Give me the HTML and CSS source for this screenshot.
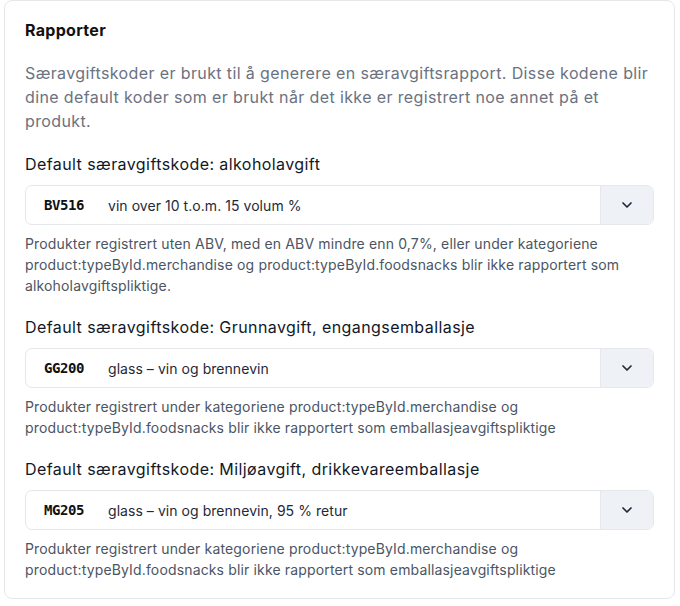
FILE: index.html
```html
<!DOCTYPE html>
<html lang="no">
<head>
<meta charset="utf-8">
<link rel="stylesheet" href="styles.css">
</head>
<body>
<div class="page">
  <section class="card">
    <h2 class="title">Rapporter</h2>
    <p class="intro">Særavgiftskoder er brukt til å generere en særavgiftsrapport. Disse kodene blir dine default koder som er brukt når det ikke er registrert noe annet på et produkt.</p>

    <div class="field">
      <label class="label">Default særavgiftskode: alkoholavgift</label>
      <div class="select">
        <div class="value"><span class="code">BV516</span><span class="desc">vin over 10 t.o.m. 15 volum %</span></div>
        <div class="toggle"><svg width="12" height="8" viewBox="0 0 12 8"><path d="M2 2l4 4 4-4" fill="none" stroke="#1f2937" stroke-width="1.7" stroke-linecap="round" stroke-linejoin="round"/></svg></div>
      </div>
      <p class="help">Produkter registrert uten ABV, med en ABV mindre enn 0,7%, eller under kategoriene product:typeById.merchandise og product:typeById.foodsnacks blir ikke rapportert som alkoholavgiftspliktige.</p>
    </div>

    <div class="field">
      <label class="label">Default særavgiftskode: Grunnavgift, engangsemballasje</label>
      <div class="select">
        <div class="value"><span class="code">GG200</span><span class="desc">glass – vin og brennevin</span></div>
        <div class="toggle"><svg width="12" height="8" viewBox="0 0 12 8"><path d="M2 2l4 4 4-4" fill="none" stroke="#1f2937" stroke-width="1.7" stroke-linecap="round" stroke-linejoin="round"/></svg></div>
      </div>
      <p class="help">Produkter registrert under kategoriene product:typeById.merchandise og product:typeById.foodsnacks blir ikke rapportert som emballasjeavgiftspliktige</p>
    </div>

    <div class="field">
      <label class="label">Default særavgiftskode: Miljøavgift, drikkevareemballasje</label>
      <div class="select">
        <div class="value"><span class="code">MG205</span><span class="desc">glass – vin og brennevin, 95 % retur</span></div>
        <div class="toggle"><svg width="12" height="8" viewBox="0 0 12 8"><path d="M2 2l4 4 4-4" fill="none" stroke="#1f2937" stroke-width="1.7" stroke-linecap="round" stroke-linejoin="round"/></svg></div>
      </div>
      <p class="help">Produkter registrert under kategoriene product:typeById.merchandise og product:typeById.foodsnacks blir ikke rapportert som emballasjeavgiftspliktige</p>
    </div>
  </section>
</div>
</body>
</html>
```
FILE: styles.css
```css
* { box-sizing: border-box; }
html, body { margin: 0; padding: 0; background: #ffffff; }
body { font-family: Inter, "Noto Sans", sans-serif; color: #111827; }
.page { padding: 0 5px 7px 4px; }
.card {
  border: 1px solid #e5e7eb;
  border-radius: 8px;
  padding: 17px 20px 18px 20px;
  background: #ffffff;
}
.title {
  margin: 0;
  font-size: 16px;
  line-height: 24px;
  font-weight: 700;
  color: #111111;
  letter-spacing: 0.3px;
}
.intro {
  margin: 19px 0 0 0;
  font-size: 16px;
  line-height: 24px;
  color: #6b7280;
  letter-spacing: 0.38px;
}
.field { margin-top: 19px; }
.label {
  display: block;
  font-size: 16px;
  line-height: 24px;
  color: #111827;
  letter-spacing: 0.42px;
}
.select {
  margin-top: 9px;
  display: flex;
  height: 40px;
  border: 1px solid #e5e7eb;
  border-radius: 7px;
  overflow: hidden;
}
.value {
  flex: 1;
  display: flex;
  align-items: center;
  padding-left: 18px;
  gap: 24px;
}
.code {
  font-family: "DejaVu Sans Mono", monospace;
  font-weight: 700;
  font-size: 14px;
  letter-spacing: -0.4px;
  color: #111111;
  width: 40px;
}
.desc {
  font-size: 14px;
  color: #1f2937;
  letter-spacing: 0.05px;
}
.toggle {
  width: 53px;
  display: flex;
  align-items: center;
  justify-content: center;
  background: #eef1f5;
  border-left: 1px solid #e5e7eb;
}
.help {
  margin: 8px 0 0 0;
  font-size: 14px;
  line-height: 21px;
  color: #4b5563;
  letter-spacing: 0.15px;
}
```
